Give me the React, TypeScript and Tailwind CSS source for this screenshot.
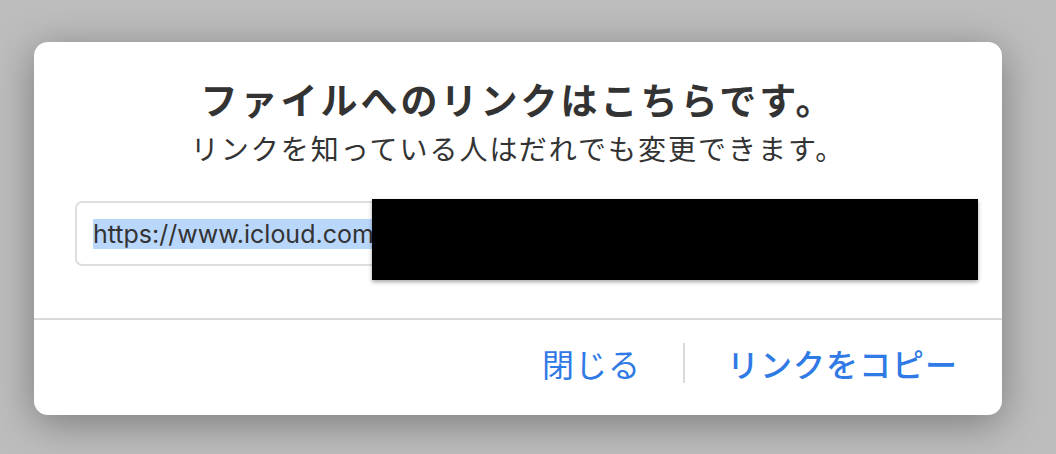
import React from "react";

export default function App() {
  const jp = { fontFamily: '"Noto Sans CJK JP", "Noto Sans", sans-serif' };
  return (
    <div className="w-[1056px] h-[454px] bg-[#bdbdbd] pt-[42px] pl-[34px] overflow-hidden" style={jp}>
      <div className="relative w-[968px] h-[373px] bg-white rounded-[14px] shadow-[0_8px_40px_rgba(0,0,0,0.35)] flex flex-col">
        <div className="flex flex-col items-center pt-[34px]">
          <div className="text-[37px] leading-[46px] font-bold text-[#333333] tracking-[3px]">ファイルへのリンクはこちらです。</div>
          <div className="text-[28px] leading-[34px] mt-[9px] text-[#333333] tracking-[2px]">リンクを知っている人はだれでも変更できます。</div>
        </div>
        <div className="px-[41px] pt-[36px]">
          <div className="h-[65px] border-2 border-[#dedede] rounded-[7px] flex items-center pl-[16px]">
            <span className="bg-[#b9d6fb] text-[25px] leading-[30px] text-[#333333]" style={{ fontFamily: '"Inter", "Liberation Sans", sans-serif' }}>https://www.icloud.com</span>
          </div>
        </div>
        <div className="absolute left-[338px] top-[157px] w-[606px] h-[81px] bg-black shadow-[0_2px_4px_rgba(0,0,0,0.35)]" />
        <div className="mt-auto border-t-2 border-[#dadada] h-[97px] flex items-center justify-end pr-[44px] pb-[10px]">
          <button className="text-[32px] text-[#2f7ae5] leading-none tracking-[1px]">閉じる</button>
          <div className="w-[2px] h-[40px] bg-[#dadada] mx-[42px]" />
          <button className="text-[32px] text-[#2f7ae5] font-medium leading-none tracking-[1px]">リンクをコピー</button>
        </div>
      </div>
    </div>
  );
}
